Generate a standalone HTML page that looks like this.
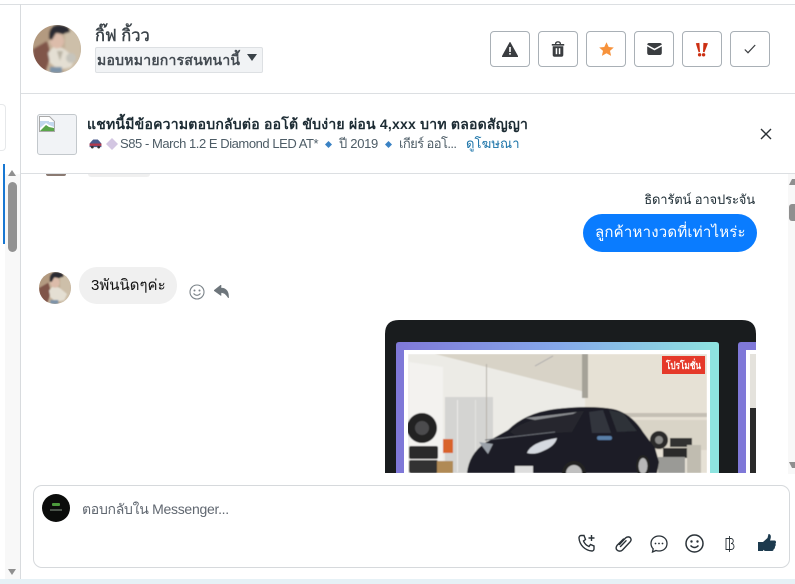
<!DOCTYPE html>
<html><head><meta charset="utf-8">
<style>
html,body{margin:0;padding:0;background:#fff}
body{width:795px;height:584px;position:relative;overflow:hidden;font-family:"Liberation Sans",sans-serif;color:#1c2b33}
.a{position:absolute}
.t{position:absolute;white-space:nowrap}
.btn{position:absolute;top:31px;width:38px;height:34px;border:1px solid #a9b0b6;border-radius:4px;background:#fff;display:flex;align-items:center;justify-content:center}
</style></head><body>
<!-- frame -->
<div class="a" style="left:0;top:4px;width:795px;height:1px;background:#dcdfe2"></div>
<div class="a" style="left:20px;top:4px;width:1px;height:576px;background:#d8dbde"></div>
<div class="a" style="left:21px;top:93px;width:774px;height:1px;background:#dcdfe2"></div>
<div class="a" style="left:21px;top:173px;width:774px;height:1px;background:#dcdfe2"></div>
<div class="a" style="left:0;top:579px;width:795px;height:5px;background:#e6f1f6"></div>
<!-- left rail -->
<div class="a" style="left:0;top:104px;width:5px;height:45px;border:1px solid #e6e8ea;border-left:0;border-radius:0 4px 4px 0"></div>
<div class="a" style="left:5px;top:174px;width:15px;height:405px;background:#f8f8f8"></div>
<div class="a" style="left:3px;top:164px;width:2px;height:80px;background:#1877d2"></div>
<div class="a" style="left:8px;top:170px;width:0;height:0;border-left:4.5px solid transparent;border-right:4.5px solid transparent;border-bottom:6px solid #8f8f8f"></div>
<div class="a" style="left:8px;top:182px;width:9px;height:70px;background:#929292;border-radius:5px"></div>
<div class="a" style="left:8px;top:569px;width:0;height:0;border-left:4.5px solid transparent;border-right:4.5px solid transparent;border-top:6px solid #8f8f8f"></div>
<!-- header avatar -->
<svg class="a" style="left:33px;top:25px" width="48" height="48" viewBox="0 0 48 48"><defs><clipPath id="c1"><circle cx="24" cy="24" r="24"/></clipPath><filter id="b1"><feGaussianBlur stdDeviation="1"/></filter></defs><g clip-path="url(#c1)"><rect width="48" height="48" fill="#c2ae96"/><g filter="url(#b1)"><path d="M0 0H18V14L0 26z" fill="#b39a80"/><path d="M0 24 14 16 18 30 12 48H0z" fill="#80544a"/><rect x="32" y="4" width="16" height="44" fill="#cdbfa9"/><path d="M15 28 20 22 30 23 42 33 38 42 26 45 17 38z" fill="#e4dfd3"/><path d="M24 26 30 26 27 36z" fill="#b9b3a4"/><circle cx="38" cy="33" r="5" fill="#c6c4bc"/><ellipse cx="24" cy="16" rx="7" ry="7.500" fill="#dcbcaa"/><path d="M16 9Q17 0 27 0 37 1 37 7L30 9 23 8 19 15 16 14z" fill="#2c2a30"/><rect x="17" y="42" width="12" height="6" fill="#7d93a8"/></g></g></svg>
<div class="t" style="left:95px;top:25px;font-size:16.500px;line-height:22px;color:#3a4248;-webkit-text-stroke:.45px #3a4248">กิ๊ฟ กิ้วว</div>
<div class="a" style="left:95px;top:47px;width:166px;height:24px;background:#f1f3f5;border:1px solid #dde0e3;border-radius:2px"></div>
<div class="t" style="left:97px;top:51px;font-size:14px;line-height:18px;font-weight:bold;color:#444b52;letter-spacing:.25px">มอบหมายการสนทนานี้</div>
<div class="a" style="left:247px;top:54px;width:0;height:0;border-left:5.500px solid transparent;border-right:5.500px solid transparent;border-top:7px solid #3a4248"></div>
<!-- action buttons -->
<div class="btn" style="left:490px"><svg width="16" height="15" viewBox="0 0 16 15"><path d="M8 .5 15.700 14.500H.3z" fill="#3a3d40" stroke="#3a3d40" stroke-linejoin="round"/><rect x="7.200" y="5" width="1.600" height="5" fill="#fff"/><rect x="7.200" y="11" width="1.600" height="1.600" fill="#fff"/></svg></div>
<div class="btn" style="left:538px"><svg width="14" height="16" viewBox="0 0 14 16"><path d="M.8 3H13.200V4.600H.8zM4 3C4 1 5.200.3 7 .3S10 1 10 3H8.700C8.700 1.900 8 1.500 7 1.500S5.300 1.900 5.300 3z" fill="#3a3d40"/><path d="M1.700 5.200H12.300V14C12.300 15 11.600 15.700 10.600 15.700H3.400C2.400 15.700 1.700 15 1.700 14z" fill="#3a3d40"/><rect x="4.700" y="7.200" width="1.500" height="6" fill="#fff"/><rect x="7.800" y="7.200" width="1.500" height="6" fill="#fff"/></svg></div>
<div class="btn" style="left:586px"><svg width="15" height="14" viewBox="0 0 15 14"><path d="M7.500.3 9.700 5 14.800 5.500 11 8.900 12.100 13.900 7.500 11.300 2.900 13.900 4 8.900.2 5.500 5.300 5z" fill="#f7923b"/></svg></div>
<div class="btn" style="left:634px"><svg width="15" height="12" viewBox="0 0 15 12"><path d="M2 0H13C14 0 14.800.8 14.800 1.600L7.500 5.600.2 1.600C.2.800 1 0 2 0z" fill="#3a3d40"/><path d="M.2 3.400 7.500 7.400 14.800 3.400V10C14.800 11 14 12 13 12H2C1 12 .2 11 .2 10z" fill="#3a3d40"/></svg></div>
<div class="btn" style="left:682px"><svg width="14" height="15" viewBox="0 0 14 15"><path d="M.8 1.300 4.400.9 5 10 3.600 10.200zM8.400.9 13 1.300 9.500 10.200 8 10z" fill="#cc2f12"/><circle cx="4.600" cy="12.800" r="1.700" fill="#cc2f12"/><circle cx="8.600" cy="12.800" r="1.700" fill="#cc2f12"/></svg></div>
<div class="btn" style="left:730px"><svg width="12" height="10" viewBox="0 0 12 10"><path d="M.8 5.500 4 8.700 11.200 1" fill="none" stroke="#3a3d40" stroke-width="1.200"/></svg></div>
<!-- ad strip -->
<div class="a" style="left:37px;top:114px;width:38px;height:39px;background:#f1f3f6;border:1px solid #c3c8cc;border-radius:3px"></div>
<svg class="a" style="left:39px;top:116px" width="16" height="16" viewBox="0 0 16 16"><path d="M.5.500H10.500L15.500 5.500V15.500H.5z" fill="#fff" stroke="#aaa"/><path d="M1 15 7 9 10 11 15 12V15z" fill="#5aa54a"/><path d="M1 5H10V6H15V11L10 9 7 7 1 12z" fill="#c3d8ee"/></svg>
<div class="t" style="left:87px;top:115px;font-size:14px;line-height:18px;font-weight:bold;color:#1c2b33;letter-spacing:.22px">แชทนี้มีข้อความตอบกลับต่อ ออโต้ ขับง่าย ผ่อน 4,xxx บาท ตลอดสัญญา</div>
<svg class="a" style="left:89px;top:139px" width="13" height="10" viewBox="0 0 14 11"><path d="M3 2 4.500.5H9.500L11 2 13.500 5V9H.5V5z" fill="#4b5b8c"/><rect x=".5" y="5" width="13" height="2.500" fill="#b5394c"/><circle cx="3.500" cy="9" r="1.500" fill="#333"/><circle cx="10.500" cy="9" r="1.500" fill="#333"/></svg>
<svg class="a" style="left:106px;top:138px" width="12" height="12" viewBox="0 0 12 12"><path d="M6 0 12 6 6 12 0 6z" fill="#d3c6e2"/></svg>
<div class="t" style="left:120px;top:136px;font-size:13px;line-height:16px;color:#4d5c66;letter-spacing:-.45px">S85 - March 1.2 E Diamond LED AT*</div>
<svg class="a" style="left:325px;top:141px" width="7" height="7"><path d="M3.500 0 7 3.500 3.500 7 0 3.500z" fill="#3a82c4"/></svg>
<div class="t" style="left:339px;top:136px;font-size:13px;line-height:16px;color:#4d5c66;letter-spacing:-.3px">ปี 2019</div>
<svg class="a" style="left:385px;top:141px" width="7" height="7"><path d="M3.500 0 7 3.500 3.500 7 0 3.500z" fill="#3a82c4"/></svg>
<div class="t" style="left:399px;top:136px;font-size:13px;line-height:16px;color:#4d5c66;letter-spacing:-.6px">เกียร์ ออโ...</div>
<div class="t" style="left:466px;top:136px;font-size:13px;line-height:16px;color:#1a73a8;letter-spacing:.1px">ดูโฆษณา</div>
<svg class="a" style="left:760px;top:128px" width="12" height="12" viewBox="0 0 12 12"><path d="M1 1 11 11M11 1 1 11" stroke="#2a3035" stroke-width="1.400"/></svg>
<!-- partial previous message -->
<div class="a" style="left:46px;top:174px;width:20px;height:2px;background:#8a7a72;border-radius:0 0 10px 10px"></div>
<div class="a" style="left:88px;top:174px;width:62px;height:3px;background:#f0f0f0;border-radius:0 0 10px 10px"></div>
<!-- right scrollbar -->
<div class="a" style="left:788px;top:174px;width:7px;height:300px;background:#f8f8f8"></div>
<div class="a" style="left:789px;top:179px;width:0;height:0;border-left:3.500px solid transparent;border-right:3.500px solid #8f8f8f;border-bottom:6px solid #8f8f8f"></div>
<div class="a" style="left:789px;top:204px;width:6px;height:17px;background:#8f8f8f;border-radius:3px 0 0 3px"></div>
<div class="a" style="left:789px;top:462px;width:0;height:0;border-left:3.500px solid transparent;border-right:3.500px solid #8f8f8f;border-top:6px solid #8f8f8f"></div>
<!-- messages -->
<div class="t" style="right:40px;top:192px;font-size:13px;line-height:16px;color:#1c2b33;letter-spacing:-.15px">ธิดารัตน์ อาจประจัน</div>
<div class="a" style="left:583px;top:214px;width:174px;height:38px;background:#0a7cff;border-radius:19px"></div>
<div class="t" style="left:595px;top:224px;font-size:15px;line-height:18px;color:#fff;letter-spacing:.2px">ลูกค้าหางวดที่เท่าไหร่ะ</div>
<svg class="a" style="left:39px;top:272px" width="32" height="32" viewBox="0 0 48 48"><defs><clipPath id="c2"><circle cx="24" cy="24" r="24"/></clipPath><filter id="b2"><feGaussianBlur stdDeviation="1"/></filter></defs><g clip-path="url(#c2)"><rect width="48" height="48" fill="#c2ae96"/><g filter="url(#b2)"><path d="M0 0H18V14L0 26z" fill="#b39a80"/><path d="M0 24 14 16 18 30 12 48H0z" fill="#80544a"/><rect x="32" y="4" width="16" height="44" fill="#cdbfa9"/><path d="M15 28 20 22 30 23 42 33 38 42 26 45 17 38z" fill="#e4dfd3"/><ellipse cx="24" cy="16" rx="7" ry="7.500" fill="#dcbcaa"/><path d="M16 9Q17 0 27 0 37 1 37 7L30 9 23 8 19 15 16 14z" fill="#2c2a30"/><rect x="17" y="42" width="12" height="6" fill="#7d93a8"/></g></g></svg>
<div class="a" style="left:79px;top:267px;width:98px;height:37px;background:#f0f0f0;border-radius:18px"></div>
<div class="t" style="left:91px;top:277px;font-size:15px;line-height:18px;color:#111">3พันนิดๆค่ะ</div>
<svg class="a" style="left:189px;top:284px" width="16" height="16" viewBox="0 0 16 16"><circle cx="8" cy="8" r="7" fill="none" stroke="#7b8389" stroke-width="1.100"/><circle cx="5.500" cy="6.500" r="1" fill="#7b8389"/><circle cx="10.500" cy="6.500" r="1" fill="#7b8389"/><path d="M4.500 9.500Q8 13 11.500 9.500" fill="none" stroke="#7b8389" stroke-width="1.100"/></svg>
<svg class="a" style="left:214px;top:285px" width="15" height="13" viewBox="0 0 15 13"><path d="M7 0 0 5.500 7 10.500V7.500C10 7.500 12 9 14.500 13 15 6.500 12 3 7 3z" fill="#6d757b" stroke="#6d757b" stroke-width=".6" stroke-linejoin="round"/></svg>
<!-- car card -->
<svg class="a" style="left:385px;top:320px" width="371" height="153" viewBox="0 0 371 153">
<defs>
<linearGradient id="g1" x1="0" y1="0" x2="1" y2="0"><stop offset="0" stop-color="#7f78d8"/><stop offset=".5" stop-color="#85a8ea"/><stop offset="1" stop-color="#8ee4e0"/></linearGradient>
<filter id="b3"><feGaussianBlur stdDeviation=".5"/></filter>
<clipPath id="card"><path d="M14 0H357Q371 0 371 14V153H0V14Q0 0 14 0z"/></clipPath>
<clipPath id="ph"><rect x="23" y="34" width="299" height="119"/></clipPath>
</defs>
<g clip-path="url(#card)">
<rect width="371" height="153" fill="#191c1e"/>
<path d="M11 25Q11 22 14 22H331Q334 22 334 25V153H11z" fill="url(#g1)"/>
<rect x="325" y="40" width="9" height="113" fill="#8ee4e0"/>
<rect x="11" y="40" width="8" height="113" fill="#7f78d8"/>
<rect x="19" y="30" width="306" height="123" fill="#fff"/>
<g clip-path="url(#ph)" filter="url(#b3)">
<rect x="23" y="34" width="299" height="119" fill="#ecebe6"/>
<path d="M50 34H200V72z" fill="#d8d3c7"/>
<rect x="200" y="34" width="122" height="119" fill="#e6e1d5"/>
<rect x="197" y="34" width="6" height="44" fill="#a5a298"/>
<path d="M24 42 58 47V153H24z" fill="#f3f2ef"/>
<rect x="60" y="77" width="48" height="76" fill="#d4d4d2"/>
<rect x="72" y="80" width="1" height="72" fill="#ecebea"/><rect x="90" y="80" width="1" height="72" fill="#e4e4e2"/>
<rect x="101" y="44" width="1" height="100" fill="#b5b1a8"/>
<path d="M150 46 168 36" stroke="#aaa" stroke-width="1"/>
<rect x="222" y="93" width="100" height="4" fill="#c4bfb4"/>
<rect x="248" y="100" width="74" height="30" fill="#d9d4c7"/>
<circle cx="37" cy="108" r="15" fill="#202022"/><circle cx="37" cy="108" r="7" fill="#4b4b4d"/>
<rect x="24" y="126" width="29" height="13" rx="2" fill="#2a2a2a"/><rect x="24" y="140" width="29" height="13" rx="2" fill="#333"/>
<rect x="58" y="119" width="10" height="14" fill="#d9632a"/>
<rect x="52" y="141" width="16" height="12" fill="#b08a55"/>
<circle cx="274" cy="120" r="9" fill="#2a2a2a"/><circle cx="274" cy="120" r="4" fill="#8a8a88"/>
<rect x="285" y="118" width="22" height="9" fill="#333"/><rect x="278" y="128" width="34" height="10" fill="#2c2c2c"/>
<rect x="273" y="137" width="27" height="16" fill="#9a9a96"/>
<rect x="302" y="125" width="14" height="28" fill="#c0bcb0"/>
<path d="M82 153Q84 134 100 123L123 110Q140 93 170 89 205 85 228 89 246 93 258 112L270 128 274 142 272 153z" fill="#1c1e26"/>
<path d="M125 112Q142 96 199 91L187 112 130 115z" fill="#25272d"/>
<path d="M140 98 192 92 188 94 150 100z" fill="#8a8c90"/>
<path d="M204 92 218 90 226 113 207 113z" fill="#33363e"/>
<path d="M224 90 238 93 252 111 232 112z" fill="#2e3138"/>
<path d="M142 133Q146 122 172 118 170 126 158 131 150 135 142 133z" fill="#d5d9e0"/>
<path d="M94 122 108 124 103 134z" fill="#9aa0a8"/>
<path d="M100 120 170 112" stroke="#6a6d74" stroke-width="1"/>
<rect x="212" y="116" width="15" height="4" rx="2" fill="#5a7fa8"/>
<rect x="130" y="146" width="18" height="7" fill="#ddd"/>
<circle cx="189" cy="153" r="12" fill="#222"/><circle cx="189" cy="153" r="8" fill="#c0c0c0"/>
<ellipse cx="258" cy="146" rx="7" ry="11" fill="#222"/><ellipse cx="258" cy="146" rx="4.500" ry="8" fill="#b8b8b8"/>
</g>
<rect x="277" y="36" width="43" height="18" fill="#e5392a"/>
<text x="298.500" y="49" font-size="10" font-weight="bold" fill="#fff" text-anchor="middle" textLength="35" lengthAdjust="spacingAndGlyphs">โปรโมชั่น</text>
<path d="M353 25Q353 22 356 22H371V153H353z" fill="#7f78d8"/>
<rect x="361" y="30" width="10" height="123" fill="#fff"/>
<rect x="365" y="34" width="6" height="119" fill="#e4e2dc"/>
<rect x="365" y="88" width="6" height="65" fill="#2a2a2a"/>
</g></svg>
<!-- composer -->
<div class="a" style="left:33px;top:485px;width:755px;height:81px;border:1px solid #d6d9dc;border-radius:9px;background:#fff"></div>
<svg class="a" style="left:42px;top:494px" width="28" height="28" viewBox="0 0 28 28"><circle cx="14" cy="14" r="14" fill="#0b0c0b"/><rect x="10" y="9" width="8" height="3" rx="1" fill="#4c9a3c"/><rect x="8" y="15.500" width="12" height="1" fill="#8a9a88"/></svg>
<div class="t" style="left:82px;top:500px;font-size:14px;line-height:18px;color:#606770;letter-spacing:-.28px">ตอบกลับใน Messenger...</div>
<svg class="a" style="left:578px;top:534px" width="18" height="18" viewBox="0 0 18 18"><path d="M3 1.500 6 1.500 7.500 5.500 5.500 7C6.500 9.500 8.500 11.500 11 12.500L12.500 10.500 16 12V15C16 16 15 17 14 17 7 16.500 1.500 11 1 4 1 2.500 2 1.500 3 1.500z" fill="none" stroke="#2a3238" stroke-width="1.400"/><path d="M13.500 1V7M10.500 4H16.500" stroke="#2a3238" stroke-width="1.400"/></svg>
<svg class="a" style="left:615px;top:535px" width="17" height="18" viewBox="0 0 17 18"><path d="M4.500 9.500 10.500 3C12 1.500 14.500 1.500 15.500 3S16 6 15 7L7.500 15C6 16.500 3.500 16.500 2 15S1 12 2 10.500L8.500 4M5.500 11.500 11 5.800" fill="none" stroke="#2a3238" stroke-width="1.400" stroke-linecap="round"/></svg>
<svg class="a" style="left:650px;top:535px" width="18" height="18" viewBox="0 0 18 18"><path d="M9 1C13.500 1 17 4 17 8.500S13.500 16 9 16C7.800 16 6.800 15.800 6 15.500L2.500 17 3.200 13.800C1.800 12.500 1 10.500 1 8.500 1 4 4.500 1 9 1z" fill="none" stroke="#2a3238" stroke-width="1.300"/><circle cx="5.500" cy="8.500" r=".9" fill="#2a3238"/><circle cx="9" cy="8.500" r=".9" fill="#2a3238"/><circle cx="12.500" cy="8.500" r=".9" fill="#2a3238"/></svg>
<svg class="a" style="left:685px;top:534px" width="19" height="19" viewBox="0 0 19 19"><circle cx="9.500" cy="9.500" r="8.500" fill="none" stroke="#2a3238" stroke-width="1.500"/><circle cx="6.500" cy="7.500" r="1.200" fill="#2a3238"/><circle cx="12.500" cy="7.500" r="1.200" fill="#2a3238"/><path d="M5.500 11.500Q9.500 15.500 13.500 11.500" fill="none" stroke="#2a3238" stroke-width="1.400"/></svg>
<svg class="a" style="left:724px;top:535px" width="12" height="18" viewBox="0 0 12 18"><path d="M2 3.500H7C10 3.500 10 8.500 7 8.500 11 8.500 11 14.500 7 14.500H2zM5.500 1V17" fill="none" stroke="#2a3238" stroke-width=".9"/></svg>
<svg class="a" style="left:758px;top:534px" width="18" height="18" viewBox="0 0 18 18"><path d="M0 8H5V17H0z" fill="#1c3a4e"/><path d="M5 8 9.500 4 10.500 0C13 0 13.500 2.500 12 6.500H16.500C18 6.500 18.500 8.500 17.500 9.500 18 11 17.500 12 17 12.500 17 14 16.500 15 15.500 15.500 15.500 16.500 15 17 14 17H8C6.500 17 5 16 5 15.500z" fill="#1c3a4e"/></svg>
</body></html>
